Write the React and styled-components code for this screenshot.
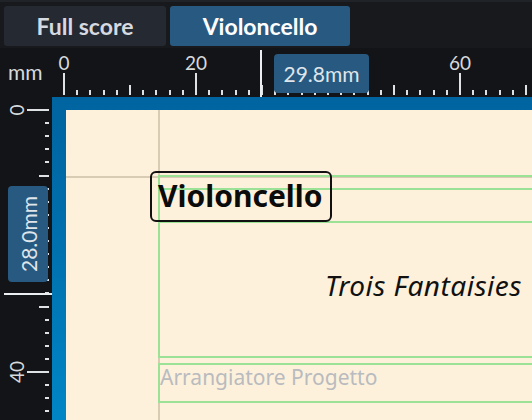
import React from 'react';
import styled, { createGlobalStyle } from 'styled-components';

const Global = createGlobalStyle`
  html, body { margin: 0; padding: 0; background: #131417; }
  body { width: 532px; height: 420px; overflow: hidden; font-family: Lato, "Noto Sans", sans-serif; }
  * { box-sizing: border-box; }
`;

const Shell = styled.div`
  width: 532px;
  height: 420px;
  display: flex;
  flex-direction: column;
  background: #131417;
  overflow: hidden;
`;

const TabBar = styled.div`
  flex: none;
  height: 48px;
  display: flex;
  gap: 4px;
  padding: 4px 4px 2px;
  background: #17191d;
  border-top: 2px solid #202328;
`;

const Tab = styled.div`
  width: ${(p) => p.$w}px;
  height: 40px;
  border-radius: 3px;
  display: flex;
  align-items: center;
  justify-content: center;
  font-family: Lato, sans-serif;
  font-weight: 700;
  font-size: 23px;
  background: ${(p) => (p.$active ? '#285a81' : '#252a32')};
  color: ${(p) => (p.$active ? '#ffffff' : '#d6dae0')};
`;

const Workspace = styled.div`
  flex: 1;
  display: grid;
  grid-template-columns: 52px 1fr;
  grid-template-rows: 49px 1fr;
  min-height: 0;
`;

const Corner = styled.div`
  padding: 12px 0 0 8px;
  font-size: 21px;
  line-height: 24px;
  color: #d6dadd;
`;

const Ruler = styled.div`
  position: relative;
  overflow: hidden;
  background: #131417;
`;

const RulerSvg = styled.svg`
  display: block;
`;

const Readout = styled.div`
  position: absolute;
  background: #285a81;
  border-radius: 4px;
  color: #dfe5ea;
  font-size: 21px;
  display: flex;
  align-items: center;
  justify-content: center;
  ${(p) =>
    p.$vertical
      ? `left: 8px; top: 89px; width: 40px; height: 96px;`
      : `left: 222px; top: 6px; width: 95px; height: 39px;`}
`;

const VerticalText = styled.span`
  writing-mode: vertical-rl;
  transform: rotate(180deg);
  line-height: 1;
`;

const PageArea = styled.div`
  padding: 13px 0 0 14px;
  background: linear-gradient(180deg, #0064a0 0%, #0070ae 45%, #0086c6 100%);
  min-height: 0;
  overflow: hidden;
`;

const Page = styled.div`
  position: relative;
  height: 100%;
  background: #fdf1dc;
  overflow: hidden;
`;

const Guide = styled.div`
  position: absolute;
  background: #d9ccb4;
  ${(p) =>
    p.$vertical
      ? `left: ${p.$at}px; top: 0; bottom: 0; width: 1.5px;`
      : `top: ${p.$at}px; left: 0; right: 0; height: 1.5px;`}
`;

const Frame = styled.div`
  position: absolute;
  left: 92px;
  width: 520px;
  top: ${(p) => p.$top}px;
  height: ${(p) => p.$h}px;
  border: 2px solid #9be297;
  border-right: none;
  padding: ${(p) => p.$pad || '0'};
`;

const NameBox = styled.div`
  position: absolute;
  left: 84px;
  top: 61px;
  height: 51px;
  padding: 0 8px 0 6px;
  border: 2px solid #111;
  border-radius: 6px;
  font-family: "Noto Sans", sans-serif;
  font-weight: 700;
  font-size: 30px;
  line-height: 45px;
  color: #0b0b0b;
  white-space: nowrap;
`;

const Title = styled.div`
  font-family: "Noto Sans", sans-serif;
  font-style: italic;
  font-size: 28px;
  line-height: 28px;
  letter-spacing: 0.5px;
  color: #111;
  white-space: nowrap;
`;

const Credit = styled.div`
  font-family: "Noto Sans", sans-serif;
  font-size: 21px;
  line-height: 24px;
  color: #b9bbbf;
  white-space: nowrap;
`;

const TICK = '#dfe2e5';

function HRuler() {
  const ticks = [];
  const labels = [];
  for (let mm = 0; mm <= 74; mm += 2) {
    const x = Math.round(12 + mm * 6.6);
    const major = mm % 20 === 0;
    const mid = !major && mm % 10 === 0;
    const y = major ? 25 : mid ? 37 : 42;
    ticks.push(<rect key={mm} x={x - 1} y={y} width="2" height={47 - y} fill={TICK} />);
    if (major && mm !== 40) {
      labels.push(
        <text key={'l' + mm} x={x} y="22" textAnchor="middle" fontSize="19" fill="#d6dadd" fontFamily="Lato, sans-serif">
          {mm}
        </text>
      );
    }
  }
  return (
    <Ruler>
      <RulerSvg width="480" height="49">
        {ticks}
        {labels}
        <rect x="208" y="2" width="2" height="47" fill="#eceff1" />
      </RulerSvg>
      <Readout>29.8mm</Readout>
    </Ruler>
  );
}

function VRuler() {
  const ticks = [];
  const labels = [];
  for (let mm = 0; mm <= 48; mm += 2) {
    const y = Math.round(13 + mm * 6.55);
    const major = mm % 20 === 0;
    const mid = !major && mm % 10 === 0;
    const x = major ? 27 : mid ? 39 : 45;
    ticks.push(<rect key={mm} x={x} y={y - 1} width={49 - x} height="2" fill={TICK} />);
    if (major && mm !== 20) {
      labels.push(
        <text
          key={'l' + mm}
          x="24"
          y={y}
          textAnchor="middle"
          fontSize="19"
          fill="#d6dadd"
          fontFamily="Lato, sans-serif"
          transform={`rotate(-90 24 ${y})`}
        >
          {mm}
        </text>
      );
    }
  }
  return (
    <Ruler>
      <RulerSvg width="52" height="323">
        {ticks}
        {labels}
        <rect x="4" y="196" width="48" height="2" fill="#eceff1" />
      </RulerSvg>
      <Readout $vertical>
        <VerticalText>28.0mm</VerticalText>
      </Readout>
    </Ruler>
  );
}

export default function App() {
  return (
    <Shell>
      <Global />
      <TabBar>
        <Tab $w={162}>Full score</Tab>
        <Tab $w={180} $active>Violoncello</Tab>
      </TabBar>
      <Workspace>
        <Corner>mm</Corner>
        <HRuler />
        <VRuler />
        <PageArea>
          <Page>
            <Guide $vertical $at={92} />
            <Guide $at={66} />
            <Frame $top={65} $h={48} />
            <Frame $top={78} $h={170} $pad="81px 0 0 165px">
              <Title>Trois Fantaisies</Title>
            </Frame>
            <Frame $top={253} $h={40} $pad="0 0 0 0">
              <Credit>Arrangiatore Progetto</Credit>
            </Frame>
            <NameBox>Violoncello</NameBox>
          </Page>
        </PageArea>
      </Workspace>
    </Shell>
  );
}
